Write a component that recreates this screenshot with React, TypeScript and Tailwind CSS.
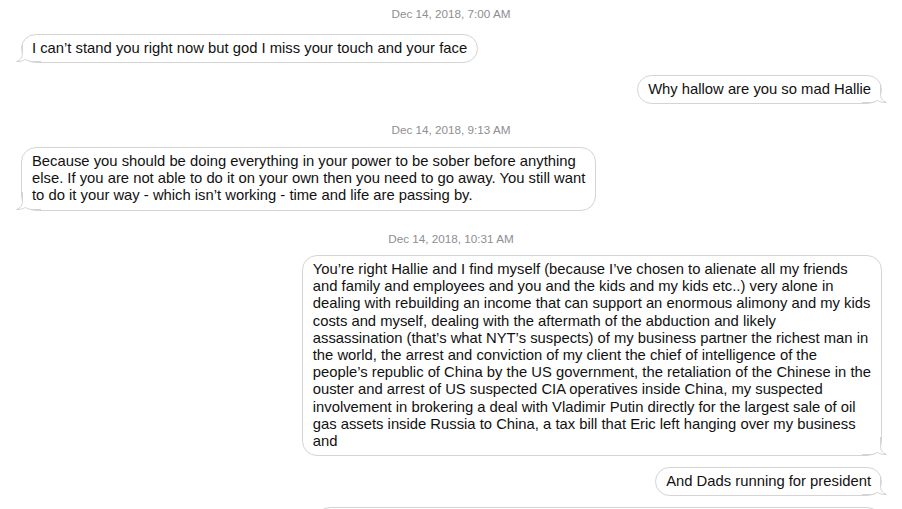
import React from "react";

type Msg =
  | { kind: "time"; text: string; className: string }
  | { kind: "bubble"; side: "left" | "right"; lines: string[]; className: string };

const messages: Msg[] = [
  { kind: "time", text: "Dec 14, 2018, 7:00 AM", className: "mt-[7px]" },
  {
    kind: "bubble",
    side: "left",
    lines: ["I can\u2019t stand you right now but god I miss your touch and your face"],
    className: "mt-[14px]",
  },
  {
    kind: "bubble",
    side: "right",
    lines: ["Why hallow are you so mad Hallie"],
    className: "mt-[12px]",
  },
  { kind: "time", text: "Dec 14, 2018, 9:13 AM", className: "mt-[19px]" },
  {
    kind: "bubble",
    side: "left",
    lines: [
      "Because you should be doing everything in your power to be sober before anything",
      "else. If you are not able to do it on your own then you need to go away. You still want",
      "to do it your way - which isn\u2019t working - time and life are passing by.",
    ],
    className: "mt-[10.5px]",
  },
  { kind: "time", text: "Dec 14, 2018, 10:31 AM", className: "mt-[21px]" },
  {
    kind: "bubble",
    side: "right",
    lines: [
      "You\u2019re right Hallie and I find myself (because I\u2019ve chosen to alienate all my friends",
      "and family and employees and you and the kids and my kids etc..) very alone in",
      "dealing with rebuilding an income that can support an enormous alimony and my kids",
      "costs and myself, dealing with the aftermath of the abduction and likely",
      "assassination (that\u2019s what NYT\u2019s suspects) of my business partner the richest man in",
      "the world, the arrest and conviction of my client the chief of intelligence of the",
      "people\u2019s republic of China by the US government, the retaliation of the Chinese in the",
      "ouster and arrest of US suspected CIA operatives inside China, my suspected",
      "involvement in brokering a deal with Vladimir Putin directly for the largest sale of oil",
      "gas assets inside Russia to China, a tax bill that Eric left hanging over my business",
      "and",
    ],
    className: "mt-[10.4px]",
  },
  {
    kind: "bubble",
    side: "right",
    lines: ["And Dads running for president"],
    className: "mt-[11px]",
  },
  {
    kind: "bubble",
    side: "right",
    lines: ["", "", ""],
    className: "mt-[11px] w-[567px]",
  },
];

const Tail: React.FC<{ side: "left" | "right" }> = ({ side }) => (
  <svg
    width="26"
    height="18"
    viewBox="0 0 26 18"
    className={
      side === "left"
        ? "absolute left-[-7px] bottom-0"
        : "absolute right-[-7px] bottom-0 -scale-x-100"
    }
  >
    <path
      d="M7.5 0 V9 C7.5 13 5.5 16 1.5 17.5 C5 17.8 8.5 16.8 10.5 15.3 C12.5 17 15 17.5 18 17.5 H26 V0 Z"
      fill="#ffffff"
    />
    <path
      d="M7.5 0 V9 C7.5 13 5.5 16 1.5 17.5 C5 17.8 8.5 16.8 10.5 15.3 C12.5 17 15 17.5 18 17.5 H26"
      fill="none"
      stroke="#d4d4d4"
      strokeWidth="1"
    />
  </svg>
);

const Bubble: React.FC<{ side: "left" | "right"; lines: string[]; className: string }> = ({
  side,
  lines,
  className,
}) => (
  <div className={`flex ${side === "left" ? "justify-start pl-[21px]" : "justify-end pr-[20px]"}`}>
    <div
      className={`relative rounded-[15px] border border-[#d4d4d4] bg-white px-[10px] py-[5px] text-[14.8px] leading-[17.2px] text-[#111111] ${className}`}
    >
      <Tail side={side} />
      {lines.map((line, i) => (
        <div key={i} className="relative whitespace-nowrap min-h-[17.2px]">
          {line}
        </div>
      ))}
    </div>
  </div>
);

export default function App() {
  return (
    <div
      className="w-[902px] h-[509px] overflow-hidden bg-white flex flex-col"
      style={{ fontFamily: '"Liberation Sans", Arial, sans-serif' }}
    >
      {messages.map((m, i) =>
        m.kind === "time" ? (
          <div
            key={i}
            className={`text-center text-[11.7px] leading-[13px] text-[#8e8e93] ${m.className}`}
          >
            {m.text}
          </div>
        ) : (
          <Bubble key={i} side={m.side} lines={m.lines} className={m.className} />
        )
      )}
    </div>
  );
}
